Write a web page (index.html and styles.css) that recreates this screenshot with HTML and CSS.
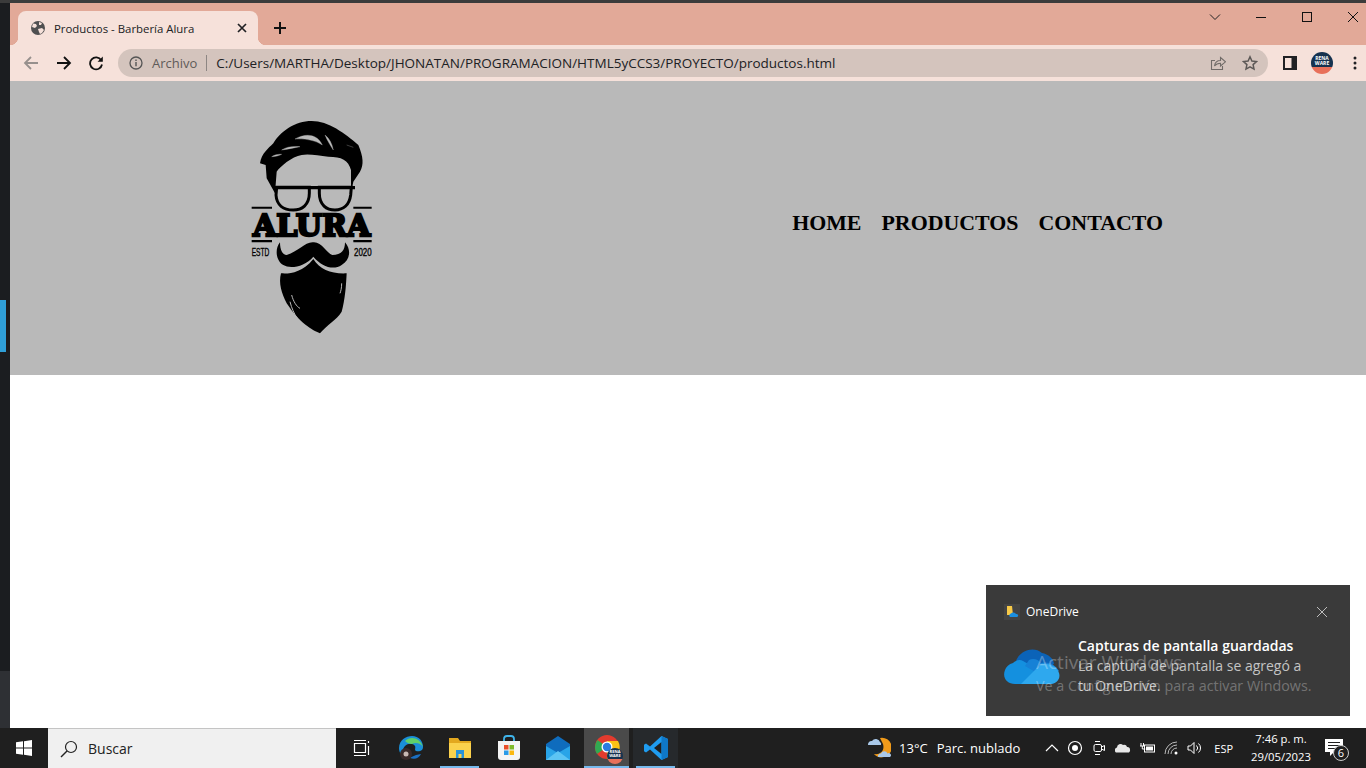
FILE: index.html
```html
<!DOCTYPE html>
<html lang="es">
<head>
  <meta charset="UTF-8">
  <title>Productos - Barbería Alura</title>
  <link rel="stylesheet" href="styles.css">
</head>
<body>

<div class="top-edge"></div>

<div class="desk">
  <!-- Borde de la ventana de atrás -->
  <div class="side">
    <div class="side-blue"></div>
    <div class="side-low"></div>
  </div>

  <div class="window">
    <!-- Pestañas -->
    <div class="tabstrip">
      <div class="tab">
        <svg class="tab-globe" width="16" height="16" viewBox="0 0 16 16"><circle cx="8" cy="8" r="7" fill="#4f4f50"/><path d="M3 3.500l3 .5 1 2-2 2-3-1zM9 2l3 1-1 2-2 0zM8 9l4-1 2 2-2 3-2 1-1-2z" fill="#f6e1da"/></svg>
        <span class="tab-title">Productos - Barbería Alura</span>
        <svg class="tab-close" width="10" height="10" viewBox="0 0 10 10"><path d="M1 1l8 8M9 1l-8 8" stroke="#202124" stroke-width="1.700"/></svg>
      </div>
      <svg class="tab-new" width="14" height="14" viewBox="0 0 14 14"><path d="M7 1v12M1 7h12" stroke="#111" stroke-width="2"/></svg>
      <div class="win-controls">
        <svg width="16" height="16" viewBox="0 0 16 16"><path d="M3 5.500l5 5 5-5" fill="none" stroke="#222" stroke-width="1"/></svg>
        <svg width="16" height="16" viewBox="0 0 16 16"><path d="M3 8.500h10" stroke="#111" stroke-width="1"/></svg>
        <svg width="16" height="16" viewBox="0 0 16 16"><rect x="3.500" y="3.500" width="9" height="9" fill="none" stroke="#111" stroke-width="1"/></svg>
        <svg width="16" height="16" viewBox="0 0 16 16"><path d="M3 3l10 10M13 3L3 13" stroke="#111" stroke-width="1"/></svg>
      </div>
    </div>

    <!-- Barra de direcciones -->
    <div class="toolbar">
      <svg class="btn-back" width="16" height="16" viewBox="0 0 16 16"><path d="M15 8H2M8 2L2 8l6 6" fill="none" stroke="#97908d" stroke-width="1.800"/></svg>
      <svg class="btn-forward" width="16" height="16" viewBox="0 0 16 16"><path d="M1 8h13M8 2l6 6-6 6" fill="none" stroke="#111" stroke-width="1.800"/></svg>
      <svg class="btn-reload" width="16" height="16" viewBox="0 0 16 16"><path d="M13.200 5.200A6 6 0 1 0 14 9.500" fill="none" stroke="#111" stroke-width="1.800"/><path d="M14.800 1.600v5.200H9.600z" fill="#111"/></svg>
      <div class="omnibox">
        <svg width="14" height="14" viewBox="0 0 14 14"><circle cx="7" cy="7" r="6" fill="none" stroke="#555" stroke-width="1.300"/><path d="M7 6v4.200M7 3.400v1.500" stroke="#555" stroke-width="1.400"/></svg>
        <span class="omni-scheme">Archivo</span>
        <span class="omni-sep"></span>
        <span class="omni-url">C:/Users/MARTHA/Desktop/JHONATAN/PROGRAMACION/HTML5yCCS3/PROYECTO/productos.html</span>
        <svg class="omni-share" width="16" height="16" viewBox="0 0 16 16"><path d="M5 5.500H1.500v9h11V11" fill="none" stroke="#706b68" stroke-width="1.100"/><path d="M4.500 11C5 7.500 7.500 5.500 10.500 5.500V2.500L15.500 6.800 10.500 11V8.200C8 8.200 6 9 4.500 11z" fill="none" stroke="#706b68" stroke-width="1.100"/></svg>
        <svg class="omni-star" width="16" height="16" viewBox="0 0 16 16"><path d="M8 1.800l1.900 4.200 4.600.5-3.400 3.100.9 4.500L8 11.800l-4 2.300.9-4.500L1.500 6.500l4.600-.5z" fill="none" stroke="#5c5856" stroke-width="1.500"/></svg>
      </div>
      <svg class="btn-panel" width="14" height="14" viewBox="0 0 14 14"><rect x="0" y="0" width="14" height="14" fill="#202124"/><rect x="2" y="2" width="6.500" height="10" fill="#f6e1da"/></svg>
      <div class="avatar"><span>RENA<br>WARE</span></div>
      <svg class="btn-menu" width="4" height="14" viewBox="0 0 4 14"><circle cx="2" cy="2" r="1.500" fill="#202124"/><circle cx="2" cy="7" r="1.500" fill="#202124"/><circle cx="2" cy="12" r="1.500" fill="#202124"/></svg>
    </div>

    <!-- Página -->
    <header class="site-header">
      <svg class="logo" width="160" height="235" viewBox="0 0 480 705">
        <path d="M135 250L110 205L107 165L90 160C95 130 115 115 130 100C150 65 195 33 245 33C295 33 345 70 385 105C400 140 402 165 390 185L370 215L363 250V180C355 150 335 140 295 140C265 137 235 130 215 135C185 140 150 170 140 185z" fill="#000"/>
        <path d="M195 87C225 70 260 70 277 105C255 90 220 85 195 87zM285 75C298 85 306 100 310 120C302 108 292 92 285 75zM155 120C170 110 190 108 210 110C190 114 172 118 155 120zM125 140C135 134 145 132 155 133C147 137 136 140 125 140zM350 105L370 112" fill="#b9b9b9" stroke="#b9b9b9" stroke-width="1"/>
        <path d="M130 228H375V238H130z" fill="#000"/>
        <path d="M140 232H238V250C238 285 215 300 190 300C160 300 140 285 138 255z" fill="none" stroke="#000" stroke-width="9"/>
        <path d="M268 232H364L362 255C358 285 340 300 315 300C290 300 268 285 268 250z" fill="none" stroke="#000" stroke-width="9"/>
        <path d="M65 290H126V296H65zM370 290H425V296H370zM65 390H126V397H65zM370 390H425V397H370z" fill="#000"/>
        <text class="logo-name" x="69" y="378" textLength="352" lengthAdjust="spacingAndGlyphs">ALURA</text>
        <text class="logo-small" x="65" y="437" textLength="53" lengthAdjust="spacingAndGlyphs">ESTD</text>
        <text class="logo-small" x="372" y="437" textLength="53" lengthAdjust="spacingAndGlyphs">2020</text>
        <path d="M150 397C132 420 140 455 160 465C180 478 225 470 250 440C275 470 310 482 335 465C360 450 365 420 345 397C345 420 335 435 307 435C290 430 275 395 250 397C225 395 205 425 170 435C158 435 150 420 150 397z" fill="#000"/>
        <path d="M153 490C175 492 215 490 250 447C270 480 305 492 350 490C348 530 345 570 335 605C320 630 290 645 270 670C245 660 210 640 170 580C155 550 145 520 153 490z" fill="#000"/>
        <path d="M185 555C190 575 200 590 210 595M180 575C190 615 210 640 230 650M335 520C335 535 332 545 330 550" fill="none" stroke="#b9b9b9" stroke-width="3"/>
      </svg>
      <nav class="site-nav">
        <a href="#">HOME</a>
        <a href="#">PRODUCTOS</a>
        <a href="#">CONTACTO</a>
      </nav>
    </header>
    <main class="page-body"></main>
  </div>

  <!-- Marca de activación -->
  <div class="watermark">
    <div class="wm-title">Activar Windows</div>
    <div class="wm-text">Ve a Configuración para activar Windows.</div>
  </div>

  <!-- Notificación -->
  <aside class="toast">
    <div class="toast-head">
      <svg width="16" height="16" viewBox="0 0 16 16"><rect width="16" height="16" fill="#444"/><path d="M3 2h5l1 9H3z" fill="#f7c948"/><path d="M6 13a2 2 0 0 1 1-3.500 3 3 0 0 1 5 .5 1.500 1.500 0 0 1 1 3z" fill="#1b8fe0"/></svg>
      <span class="toast-app">OneDrive</span>
      <svg class="toast-close" width="12" height="12" viewBox="0 0 12 12"><path d="M1 1l10 10M11 1L1 11" stroke="#bdbdbd" stroke-width="1"/></svg>
    </div>
    <div class="toast-main">
      <svg class="toast-cloud" width="56" height="38" viewBox="0 0 56 38">
        <path d="M12 14C16 3 30 -1 38 6C44 7 50 12 50 17L22 30z" fill="#0b63b8"/>
        <path d="M9 16C12 13 16 12 19 14L40 26 22 37H11C3 37 -2 31 1 23C2 20 5 17 9 16z" fill="#1490df"/>
        <path d="M25 13C29 11 34 12 37 16C44 14 51 17 55 24L40 30 21 19z" fill="#1681d6"/>
        <path d="M17 37L37 17C44 16 53 19 55 26C57 32 52 37 46 37z" fill="#2ea8ee"/>
      </svg>
      <div class="toast-copy">
        <div class="toast-title">Capturas de pantalla guardadas</div>
        <div class="toast-text">La captura de pantalla se agregó a tu OneDrive.</div>
      </div>
    </div>
  </aside>
</div>

<!-- Barra de tareas -->
<footer class="taskbar">
  <svg class="start" width="16" height="16" viewBox="0 0 16 16"><path d="M0 2.300l7-1V7.500H0zM8 1.200L16 0v7.500H8zM0 8.500h7v6.200l-7-1zM8 8.500h8V16l-8-1.200z" fill="#fff"/></svg>
  <div class="search">
    <svg width="18" height="18" viewBox="0 0 18 18"><circle cx="11" cy="7" r="5.500" fill="none" stroke="#222" stroke-width="1.200"/><path d="M7 11l-6 6" stroke="#222" stroke-width="1.500"/></svg>
    <span>Buscar</span>
  </div>
  <div class="task-icons">
    <div class="task-item"><svg width="18" height="18" viewBox="0 0 18 18"><path d="M2.500 4.500h11v9h-11zM2 1.500h12M2 16.500h12M16.500 2v2M16.500 7v9" fill="none" stroke="#fff" stroke-width="1.200"/></svg></div>
    <div class="task-item"><svg width="26" height="26" viewBox="0 0 26 26"><path d="M1 13C1 5 8 1 14 1c7 0 11 5 11 11 0 4-4 5-7 4-2-1 0-3-1-5-2-3-7-3-10 0-3 3-3 9 1 12C4 22 1 18 1 13z" fill="#1a8fd8"/><path d="M7 6c5-5 15-4 18 6-2-4-8-5-11-3-3 0-5-1-7-3z" fill="#5fd06a"/><path d="M12 23c5 2 9 0 11-4l-5 1c-2 1-5 2-6 3z" fill="#1b6fc2"/><circle cx="8" cy="19" r="6" fill="#3a2a2a"/><circle cx="8" cy="19" r="2.500" fill="#c9b8b4"/></svg></div>
    <div class="task-item is-open"><svg width="24" height="22" viewBox="0 0 24 22"><path d="M1 1h9l2 3h11v4H1z" fill="#e3a81f"/><path d="M1 6h22v15H1z" fill="#fbd24d"/><path d="M8 13h8v8h-2.500v-4h-3v4H8z" fill="#2a93d8"/></svg></div>
    <div class="task-item"><svg width="24" height="26" viewBox="0 0 24 26"><path d="M7 7V4a3 3 0 0 1 3-3h4a3 3 0 0 1 3 3v3" fill="none" stroke="#3fb4ea" stroke-width="1.800"/><path d="M1 6h22v16a3 3 0 0 1-3 3H4a3 3 0 0 1-3-3z" fill="#f4f4f4"/><path d="M7 10h4.500v4.500H7z" fill="#ea4f2a"/><path d="M12.500 10H17v4.500h-4.500z" fill="#7fba2a"/><path d="M7 15.500h4.500V20H7z" fill="#2a9be8"/><path d="M12.500 15.500H17V20h-4.500z" fill="#fbb80e"/></svg></div>
    <div class="task-item"><svg width="26" height="24" viewBox="0 0 26 24"><path d="M13 0l12 8v3L13 18 1 11V8z" fill="#0f6cbd"/><path d="M1 10l12 7 12-7v14H1z" fill="#29a4e8"/><path d="M1 24l12-9 12 9z" fill="#5cc4f4"/></svg></div>
    <div class="task-item is-active">
      <svg width="26" height="26" viewBox="0 0 26 26"><circle cx="13" cy="13" r="12" fill="#e33b2e"/><path d="M13 13L3 20A12 12 0 0 1 3.500 6z" fill="#31a952"/><path d="M13 7h11a12 12 0 0 1-11 18z" fill="#fbc116"/><circle cx="13" cy="13" r="5.500" fill="#fff"/><circle cx="13" cy="13" r="4.200" fill="#2a7de1"/></svg>
      <div class="task-badge"><span>RENA<br>WARE</span></div>
    </div>
    <div class="task-item is-open is-code"><svg width="26" height="26" viewBox="0 0 26 26"><path d="M18.500 1L25 4v18l-6.500 3L7 14.500l-4 3-2-1.200v-6.600l2-1.200 4 3z" fill="#1f9cf0"/><path d="M18.500 7L11 13l7.500 6z" fill="#1f1f1f"/><path d="M18.500 1L25 4v18l-6.500 3z" fill="#0f78c8"/></svg></div>
  </div>

  <div class="tray">
    <svg class="tray-weather" width="24" height="24" viewBox="0 0 24 24"><path d="M13 2a9.500 9.500 0 0 1 4 19 10 10 0 0 1-10-3c6 1 11-3 9-10-1-2-2-4-3-6z" fill="#f09a1a"/><path d="M1 9a3.500 3.500 0 0 1 4-4 4.500 4.500 0 0 1 8 1 2.500 2.500 0 0 1 1 3z" fill="#a9c8e8"/><path d="M11 21a2.800 2.800 0 0 1 3-3.500 3.500 3.500 0 0 1 6.500 0 2 2 0 0 1 2.500 3.500z" fill="#a9c8e8"/></svg>
    <span class="tray-temp">13°C</span>
    <span class="tray-sky">Parc. nublado</span>
    <svg class="tray-chevron" width="14" height="10" viewBox="0 0 14 10"><path d="M1 8l6-6 6 6" fill="none" stroke="#fff" stroke-width="1.200"/></svg>
    <svg class="tray-icon" width="16" height="16" viewBox="0 0 16 16"><circle cx="8" cy="8" r="6.500" fill="none" stroke="#fff" stroke-width="1.200"/><circle cx="8" cy="8" r="3" fill="#fff"/></svg>
    <svg class="tray-icon" width="16" height="16" viewBox="0 0 16 16"><rect x="3" y="4.500" width="7.500" height="7" rx="1.500" fill="none" stroke="#fff"/><path d="M10.500 7l3-1.500v5l-3-1.500M4 1.500h5M4 14.500h5" fill="none" stroke="#fff"/></svg>
    <svg class="tray-icon" width="16" height="16" viewBox="0 0 16 16"><path d="M1 12.500a2.800 2.800 0 0 1 1-5 3.500 3.500 0 0 1 6-2.500 3 3 0 0 1 4 2 2.800 2.800 0 0 1 3 2.800 2.700 2.700 0 0 1-1 2.700z" fill="#e8e8e8"/></svg>
    <svg class="tray-icon" width="16" height="16" viewBox="0 0 16 16"><rect x="5.500" y="5" width="10" height="7" fill="none" stroke="#fff"/><rect x="7" y="6.500" width="7" height="4" fill="#fff"/><path d="M2 3v3M4.500 3v3M1 6h5M3.300 6v3h3" fill="none" stroke="#fff"/></svg>
    <svg class="tray-icon" width="16" height="16" viewBox="0 0 16 16"><path d="M2 14a12 12 0 0 1 12-12M5 14a9 9 0 0 1 9-9M8 14a6 6 0 0 1 6-6" fill="none" stroke="#ccc" stroke-width=".9"/><circle cx="13" cy="13" r="1.500" fill="#fff"/></svg>
    <svg class="tray-icon" width="16" height="16" viewBox="0 0 16 16"><path d="M1 6h2.500L7 2.500v11L3.500 10H1z" fill="none" stroke="#fff"/><path d="M9.500 5.500a3.500 3.500 0 0 1 0 5M11.500 3.500a6 6 0 0 1 0 9" fill="none" stroke="#fff"/></svg>
    <span class="tray-lang">ESP</span>
    <div class="tray-clock"><div>7:46 p. m.</div><div>29/05/2023</div></div>
    <div class="tray-notif">
      <svg width="18" height="18" viewBox="0 0 18 18"><path d="M0 0h18v13H9l-4 4v-4H0z" fill="#fff"/><path d="M3 3.500h12M3 6.500h12M3 9.500h8" stroke="#1f1f1f"/></svg>
      <span class="notif-count">6</span>
    </div>
  </div>
</footer>

</body>
</html>
```

FILE: styles.css
```css
html, body {
  margin: 0;
  padding: 0;
  height: 768px;
  overflow: hidden;
}
body {
  display: flex;
  flex-direction: column;
  font-family: "Open Sans", "Noto Sans", sans-serif;
  background-color: #1f1f1f;
}
svg {
  display: block;
  flex: none;
}
.top-edge {
  height: 3px;
  background-color: #3b3b3b;
}
.desk {
  flex: 1;
  display: flex;
  position: relative;
  min-height: 0;
}
.side {
  width: 10px;
  flex: none;
  display: flex;
  flex-direction: column;
  background-color: #1b1d20;
}
.side-blue {
  width: 6px;
  height: 52px;
  margin-top: 297px;
  background-color: #2f9fd8;
}
.side-low {
  margin-top: auto;
  height: 57px;
  background-color: #2e3034;
}
.window {
  flex: 1;
  display: flex;
  flex-direction: column;
  min-width: 0;
}

/* pestañas */
.tabstrip {
  height: 42px;
  flex: none;
  display: flex;
  align-items: flex-end;
  background-color: #e2a998;
}
.tab {
  width: 240px;
  height: 34px;
  margin-left: 8px;
  box-sizing: border-box;
  padding: 0 11px 0 12px;
  display: flex;
  align-items: center;
  background-color: #f6e1da;
  border-radius: 8px 8px 0 0;
  position: relative;
}
.tab::before, .tab::after {
  content: "";
  position: absolute;
  bottom: 0;
  width: 8px;
  height: 8px;
}
.tab::before {
  left: -8px;
  background: radial-gradient(circle at 0 0, transparent 8px, #f6e1da 8.5px);
}
.tab::after {
  right: -8px;
  background: radial-gradient(circle at 100% 0, transparent 8px, #f6e1da 8.5px);
}
.tab-title {
  margin-left: 8px;
  flex: 1;
  font-size: 11.4px;
  color: #202124;
  white-space: nowrap;
}
.tab-new {
  margin: 0 0 10px 15px;
}
.win-controls {
  margin-left: auto;
  align-self: flex-start;
  margin-top: 6px;
  padding-right: 5px;
  display: flex;
  gap: 30px;
}

/* barra de direcciones */
.toolbar {
  height: 36px;
  flex: none;
  display: flex;
  align-items: center;
  background-color: #f6e1da;
}
.btn-back {
  margin-left: 13px;
}
.btn-forward {
  margin-left: 17px;
}
.btn-reload {
  margin-left: 16px;
}
.omnibox {
  width: 1150px;
  height: 28px;
  margin-left: 14px;
  box-sizing: border-box;
  padding: 0 10px 0 11px;
  display: flex;
  align-items: center;
  background-color: #d4c4bd;
  border-radius: 14px;
  font-size: 13px;
  white-space: nowrap;
}
.omni-scheme {
  margin-left: 9px;
  color: #5f5b59;
}
.omni-sep {
  width: 1px;
  height: 16px;
  margin: 0 9px;
  background-color: #8d8683;
}
.omni-url {
  color: #202124;
  font-size: 13.5px;
}
.omni-share {
  margin-left: auto;
}
.omni-star {
  margin-left: 16px;
}
.btn-panel {
  margin-left: 15px;
}
.avatar {
  width: 22px;
  height: 22px;
  margin-left: 14px;
  border-radius: 50%;
  overflow: hidden;
  text-align: center;
  color: #fff;
  font-size: 5px;
  line-height: 5px;
  font-weight: 700;
  background: linear-gradient(#16324f 68%, #e8705a 68%);
}
.avatar span {
  display: block;
  padding-top: 4px;
}
.btn-menu {
  margin-left: 20px;
}

/* página */
.site-header {
  height: 294px;
  flex: none;
  box-sizing: border-box;
  padding: 29px 203px 0 220px;
  display: flex;
  justify-content: space-between;
  align-items: flex-start;
  background-color: #b9b9b9;
}
.logo-name {
  font-family: "DejaVu Serif", serif;
  font-weight: 700;
  font-size: 90px;
  fill: #000;
  stroke: #000;
  stroke-width: 7px;
}
.logo-small {
  font-family: "Liberation Sans", sans-serif;
  font-size: 31px;
  fill: #000;
  stroke: #000;
  stroke-width: 1px;
}
.site-nav {
  display: flex;
  gap: 20px;
  margin-top: 98px;
  font-family: "Liberation Serif", serif;
  font-size: 21.9px;
  font-weight: 700;
  line-height: 30px;
}
.site-nav a {
  color: #000;
  text-decoration: none;
}
.page-body {
  flex: 1;
  background-color: #fff;
}

/* notificación */
.toast {
  position: absolute;
  right: 16px;
  bottom: 12px;
  width: 364px;
  height: 131px;
  box-sizing: border-box;
  padding: 18px 20px 0 18px;
  background-color: #3a3a3a;
  color: #fff;
}
.toast-head {
  display: flex;
  align-items: center;
}
.toast-app {
  margin-left: 6px;
  font-size: 12px;
}
.toast-close {
  margin-left: auto;
  margin-right: 2px;
}
.toast-main {
  display: flex;
  align-items: flex-start;
}
.toast-cloud {
  margin-top: 27px;
}
.toast-copy {
  width: 236px;
  margin-top: 16px;
  margin-left: 18px;
}
.toast-title {
  font-size: 14px;
  font-weight: 600;
  line-height: 20px;
  white-space: nowrap;
}
.toast-text {
  font-size: 14px;
  line-height: 20px;
  color: #c4c4c4;
}
.watermark {
  position: absolute;
  left: 1036px;
  top: 646px;
  z-index: 2;
  color: rgba(255, 255, 255, 0.3);
  white-space: nowrap;
  pointer-events: none;
}
.wm-title {
  font-size: 19px;
  line-height: 27px;
}
.wm-text {
  font-size: 14.3px;
  line-height: 19px;
}

/* barra de tareas */
.taskbar {
  height: 40px;
  flex: none;
  display: flex;
  align-items: center;
  background-color: #1f1f1f;
  color: #fff;
}
.start {
  margin-left: 16px;
}
.search {
  width: 288px;
  height: 40px;
  margin-left: 16px;
  box-sizing: border-box;
  padding-left: 12px;
  display: flex;
  align-items: center;
  gap: 10px;
  background-color: #f0f0f0;
  border-top: 1px solid #c4c4c4;
  color: #222;
  font-size: 14px;
}
.task-icons {
  display: flex;
  height: 40px;
}
.task-item {
  width: 45px;
  height: 40px;
  margin: 0 2px;
  box-sizing: border-box;
  display: flex;
  align-items: center;
  justify-content: center;
  position: relative;
}
.task-item:nth-child(n+2) {
  left: 1px;
}
.task-item.is-open::after {
  content: "";
  position: absolute;
  left: 3px;
  right: 3px;
  bottom: 0;
  height: 2px;
  background-color: #76b9ed;
}
.task-item.is-active {
  background-color: #4a4a4a;
  border-bottom: 2px solid #76b9ed;
}
.task-item.is-code {
  background-color: #26292c;
}
.task-badge {
  position: absolute;
  left: 23px;
  top: 20px;
  width: 16px;
  height: 16px;
  border-radius: 50%;
  overflow: hidden;
  text-align: center;
  background: linear-gradient(#16324f 66%, #e8705a 66%);
  font-size: 4px;
  line-height: 4px;
  font-weight: 700;
}
.task-badge span {
  display: block;
  padding-top: 2px;
}
.tray {
  margin-left: auto;
  display: flex;
  align-items: center;
  padding-right: 23px;
  font-size: 13px;
}
.tray-temp {
  margin-left: 8px;
}
.tray-sky {
  margin-left: 9px;
  white-space: nowrap;
}
.tray-chevron {
  margin-left: 25px;
}
.tray-icon {
  margin-left: 8px;
}
.tray-lang {
  margin-left: 11px;
  font-size: 11px;
}
.tray-clock {
  margin-left: 18px;
  font-size: 11.3px;
  line-height: 18px;
  text-align: center;
  white-space: nowrap;
}
.tray-notif {
  margin-left: 14px;
  position: relative;
}
.notif-count {
  position: absolute;
  left: 8px;
  top: 6px;
  width: 14px;
  height: 14px;
  border: 1px solid #ccc;
  border-radius: 50%;
  background-color: #1f1f1f;
  font-size: 11px;
  line-height: 14px;
  text-align: center;
}
```
